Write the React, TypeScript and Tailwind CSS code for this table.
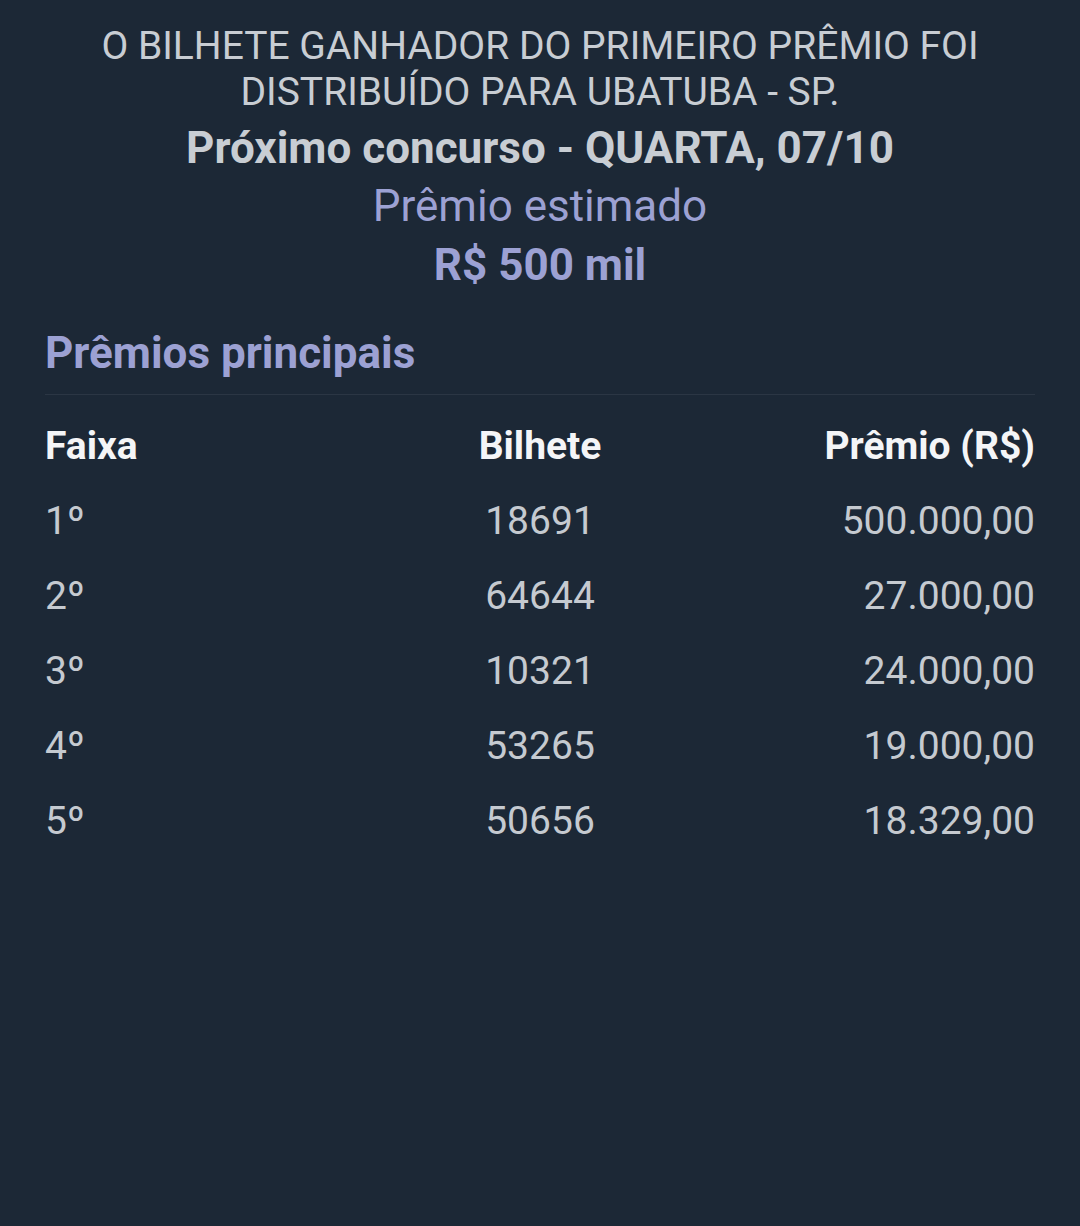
export default function App() {
  const rows = [
    { faixa: "1º", bilhete: "18691", premio: "500.000,00" },
    { faixa: "2º", bilhete: "64644", premio: "27.000,00" },
    { faixa: "3º", bilhete: "10321", premio: "24.000,00" },
    { faixa: "4º", bilhete: "53265", premio: "19.000,00" },
    { faixa: "5º", bilhete: "50656", premio: "18.329,00" },
  ];

  return (
    <div
      className="min-h-[1226px] w-full bg-[#1c2836] px-[45px] pt-[23px]"
      style={{ fontFamily: "Roboto, 'Noto Sans', sans-serif" }}
    >
      {/* Cabeçalho */}
      <div className="text-center">
        <p className="text-[39px] leading-[46px] text-[#c8cdd3] px-[40px]">
          O BILHETE GANHADOR DO PRIMEIRO PRÊMIO FOI DISTRIBUÍDO PARA UBATUBA - SP.
        </p>
        <p className="mt-[10px] text-[44px] leading-[46px] font-bold text-[#c8cdd3]">
          Próximo concurso - QUARTA, 07/10
        </p>
        <p className="mt-[12px] text-[44px] leading-[46px] text-[#9ca1d3]">
          Prêmio estimado
        </p>
        <p className="mt-[13px] text-[44px] leading-[46px] font-bold text-[#9ca1d3]">
          R$ 500 mil
        </p>
      </div>

      {/* Prêmios principais */}
      <h2 className="mt-[39px] text-[44px] leading-[52px] font-bold text-[#9ca1d3]">
        Prêmios principais
      </h2>
      <div className="mt-[15px] h-px bg-[#2b3644]" />

      <div className="mt-[22px]">
        <div className="grid grid-cols-3 h-[75px] text-[39px] font-bold text-[#f4f5f7]">
          <span>Faixa</span>
          <span className="text-center">Bilhete</span>
          <span className="text-right">Prêmio (R$)</span>
        </div>
        {rows.map((r) => (
          <div
            key={r.faixa}
            className="grid grid-cols-3 h-[75px] text-[39px] text-[#c5cad0]"
          >
            <span>{r.faixa}</span>
            <span className="text-center">{r.bilhete}</span>
            <span className="text-right">{r.premio}</span>
          </div>
        ))}
      </div>
    </div>
  );
}
